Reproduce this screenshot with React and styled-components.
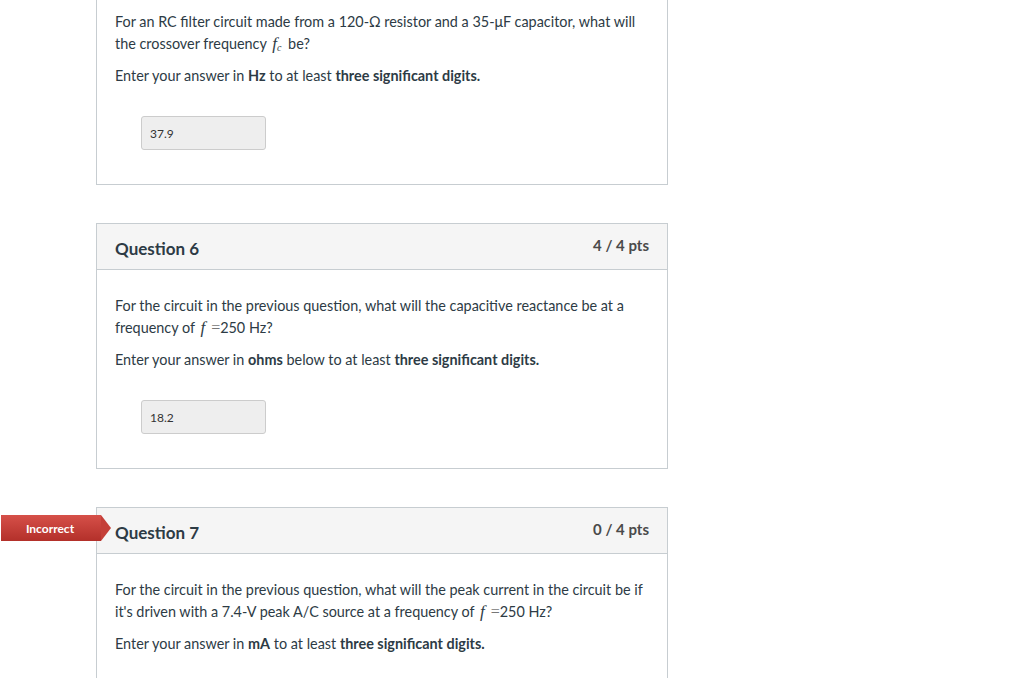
import styled, { createGlobalStyle } from "styled-components";

const GlobalStyle = createGlobalStyle`
  body {
    margin: 0;
    background: #fff;
    font-family: Lato, "Open Sans", sans-serif;
    color: #2d3b45;
  }
`;

const Page = styled.div`
  padding-left: 96px;
  height: 678px;
  overflow: hidden;
`;

const Card = styled.div`
  position: relative;
  width: 570px;
  border: 1px solid #c7cdd1;
  border-top: ${(p) => (p.$cut ? "none" : "1px solid #c7cdd1")};
  margin-bottom: 38px;
  background: #fff;
`;

const Header = styled.div`
  display: flex;
  justify-content: space-between;
  align-items: flex-start;
  height: 46px;
  padding: 0 18px;
  background: #f5f5f5;
  border-bottom: 1px solid #c7cdd1;
  box-sizing: border-box;
`;

const Title = styled.h2`
  margin: 14px 0 0;
  font-size: 17px;
  font-weight: 700;
  line-height: 22px;
`;

const Points = styled.div`
  margin-top: 10px;
  font-size: 15px;
  font-weight: 700;
  line-height: 22px;
  color: #4a4a4a;
`;

const Body = styled.div`
  padding: ${(p) => (p.$cut ? "11px" : "25px")} 18px 34px;
`;

const Para = styled.p`
  margin: 0 0 10px;
  font-size: 14.4px;
  line-height: 22px;
`;

const Var = styled.i`
  font-family: "Liberation Serif", serif;
  font-size: 17px;
  line-height: 0;
  margin: 0 3px 0 2px;
`;

const Sub = styled.sub`
  font-size: 10px;
  line-height: 0;
  vertical-align: -2px;
`;

const Eq = styled.span`
  font-family: "Liberation Serif", "DejaVu Serif", serif;
  font-size: 16px;
  line-height: 0;
  color: #777;
  margin-left: 3px;
`;

const Answer = styled.div`
  margin: 29px 0 0 26px;
  width: 125px;
  height: 34px;
  box-sizing: border-box;
  padding: 0 8px;
  display: flex;
  align-items: center;
  background: #eee;
  border: 1px solid #ccc;
  border-radius: 3px;
  font-size: 12px;
  color: #333;
`;

const Badge = styled.div`
  position: absolute;
  left: -96px;
  top: 7px;
  width: 100px;
  height: 26px;
  display: flex;
  align-items: center;
  justify-content: center;
  padding-right: 2px;
  box-sizing: border-box;
  background: linear-gradient(#d65049, #b3302a);
  color: #fff;
  font-size: 12px;
  font-weight: 700;

  &::after {
    content: "";
    position: absolute;
    right: -10px;
    top: 0;
    border-top: 13px solid transparent;
    border-bottom: 13px solid transparent;
    border-left: 10px solid #c43f38;
  }
`;

const Freq = () => (
  <>
    <Var>f</Var>
    <Eq>=</Eq>
    250 Hz?
  </>
);

export default function App() {
  return (
    <Page>
      <GlobalStyle />
      <Card $cut>
        <Body $cut>
          <Para>
            For an RC filter circuit made from a 120-Ω resistor and a 35-μF capacitor, what will the
            crossover frequency{" "}
            <Var>
              f<Sub>c</Sub>
            </Var>{" "}
            be?
          </Para>
          <Para>
            Enter your answer in <b>Hz</b> to at least <b>three significant digits.</b>
          </Para>
          <Answer>37.9</Answer>
        </Body>
      </Card>

      <Card>
        <Header>
          <Title>Question 6</Title>
          <Points>4 / 4 pts</Points>
        </Header>
        <Body>
          <Para>
            For the circuit in the previous question, what will the capacitive reactance be at a
            frequency of <Freq />
          </Para>
          <Para>
            Enter your answer in <b>ohms</b> below to at least <b>three significant digits.</b>
          </Para>
          <Answer>18.2</Answer>
        </Body>
      </Card>

      <Card>
        <Badge>Incorrect</Badge>
        <Header>
          <Title>Question 7</Title>
          <Points>0 / 4 pts</Points>
        </Header>
        <Body>
          <Para>
            For the circuit in the previous question, what will the peak current in the circuit be if
            it's driven with a 7.4-V peak A/C source at a frequency of <Freq />
          </Para>
          <Para>
            Enter your answer in <b>mA</b> to at least <b>three significant digits.</b>
          </Para>
        </Body>
      </Card>
    </Page>
  );
}
